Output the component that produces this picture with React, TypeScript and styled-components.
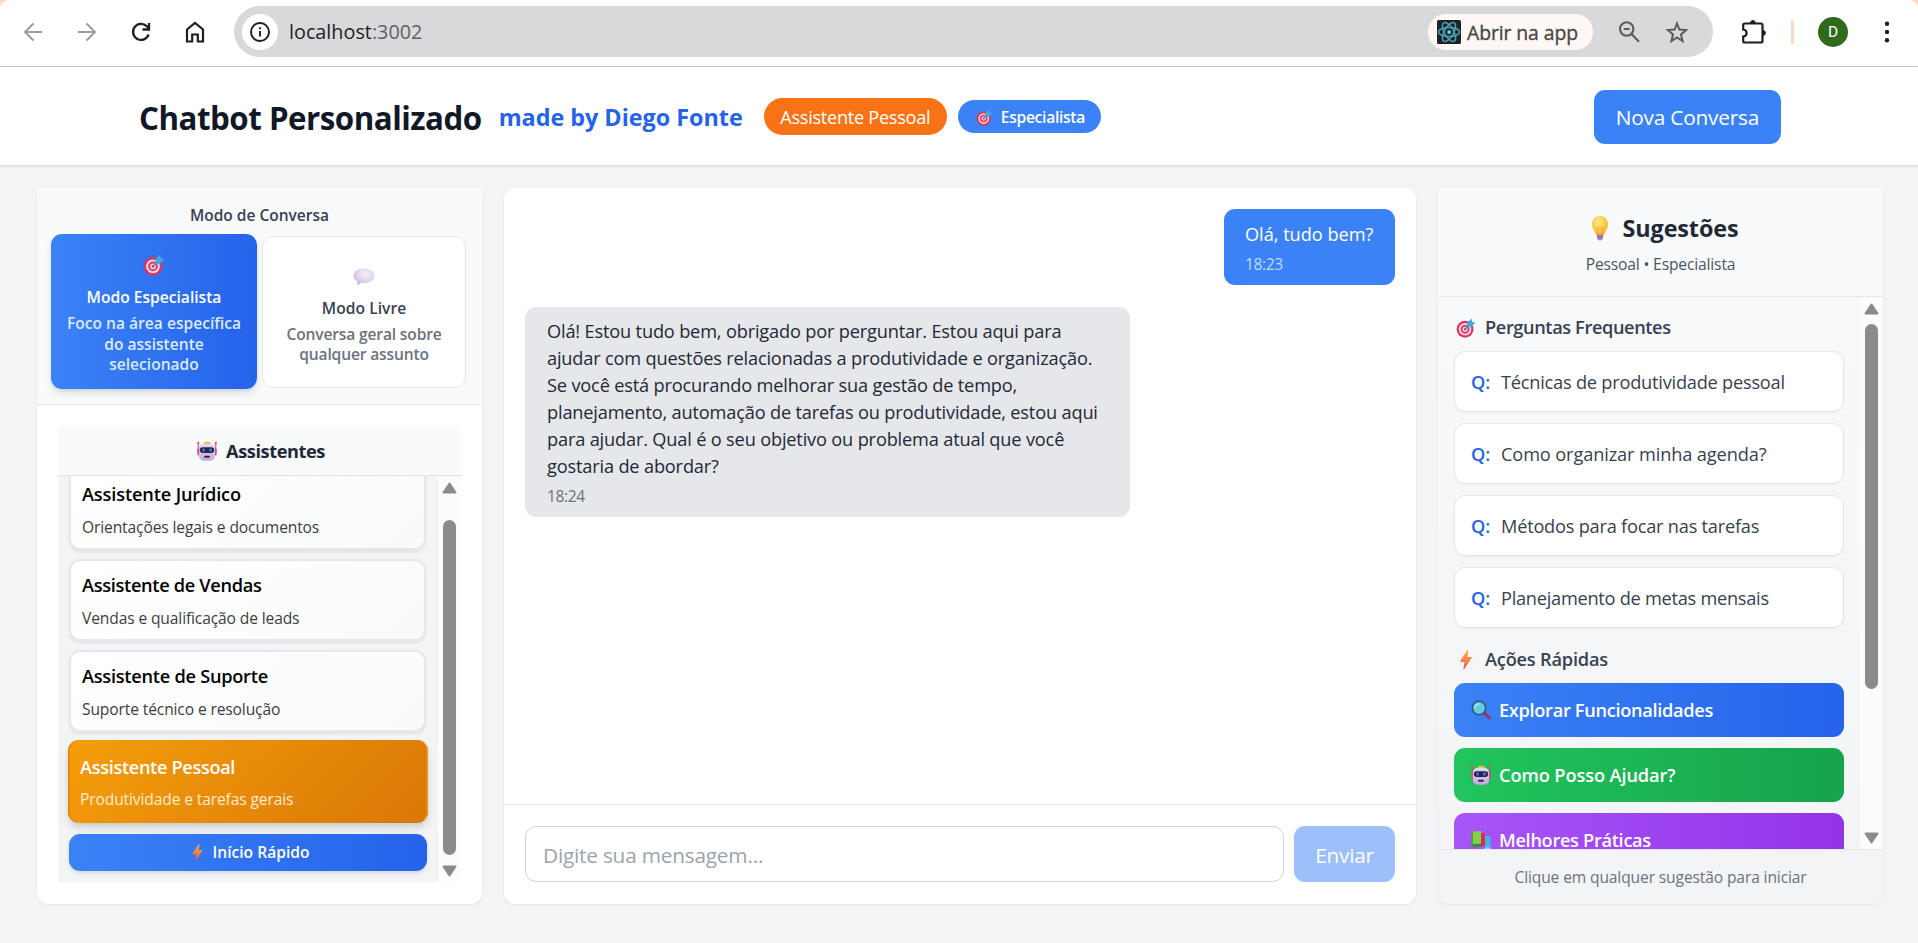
import React from 'react';
import styled, { createGlobalStyle, css } from 'styled-components';

const GlobalStyle = createGlobalStyle`
  *, *::before, *::after { box-sizing: border-box; }
  body {
    margin: 0;
    background: #f3f4f6;
    font-family: "Segoe UI", "Open Sans", "Noto Sans", sans-serif;
    color: #111827;
    overflow: hidden;
  }
  button, input { font-family: inherit; margin: 0; }
  button { border: 0; padding: 0; background: none; }
`;

const textXs = css`font-size: 15.6px; line-height: 22px;`;
const textSm = css`font-size: 18.2px; line-height: 27px;`;
const textBase = css`font-size: 20.8px; line-height: 32px;`;

/* ---------- Page ---------- */

const Page = styled.div`
  display: flex;
  flex-direction: column;
  height: 943px;
  background: #fbd9c4;
`;

/* ---------- Browser toolbar ---------- */

const Toolbar = styled.div`
  display: flex;
  align-items: center;
  flex: none;
  height: 67px;
  padding: 0 27px 3px 6px;
  background: #fff;
  border-bottom: 1px solid #c9c9cc;
  border-radius: 9px 9px 0 0;
`;

const NavButton = styled.button<{ $muted?: boolean }>`
  display: flex;
  align-items: center;
  justify-content: center;
  width: 54px;
  height: 40px;
  color: ${p => (p.$muted ? '#9b9b9b' : '#1f1f1f')};
`;

const AddressBar = styled.div`
  display: flex;
  align-items: center;
  flex: 1;
  height: 51px;
  margin-left: 12px;
  padding: 0 24px 0 8px;
  border-radius: 26px;
  background: #d9d9db;
`;

const SiteInfo = styled.span`
  display: flex;
  align-items: center;
  justify-content: center;
  width: 36px;
  height: 36px;
  border-radius: 50%;
  background: #fff;
  color: #1f1f1f;
`;

const Url = styled.span`
  flex: 1;
  margin-left: 11px;
  font-size: 19.8px;
  line-height: 30px;
  letter-spacing: 0;
  color: #1f1f1f;
  span { color: #5f6062; }
`;

const OpenInApp = styled.button`
  display: flex;
  align-items: center;
  gap: 6px;
  width: 165px;
  height: 36px;
  padding-left: 9px;
  border-radius: 18px;
  background: #fff8f4;
  font-size: 19.4px;
  line-height: 28px;
  letter-spacing: -0.1px;
  color: #474747;
  -webkit-text-stroke: 0.35px #474747;
`;

const OpenLabel = styled.span`
  padding-top: 2px;
`;

const BarIcon = styled.span<{ $gap: number }>`
  display: flex;
  margin-left: ${p => p.$gap}px;
  color: #5b5b5d;
`;

const ToolIcon = styled.span<{ $gap: number }>`
  display: flex;
  margin-left: ${p => p.$gap}px;
  color: #1f1f1f;
`;

const Separator = styled.span`
  width: 3px;
  height: 24px;
  margin-left: 24px;
  border-radius: 1.5px;
  background: #fbd9c4;
`;

const Avatar = styled.span`
  display: flex;
  align-items: center;
  justify-content: center;
  width: 30px;
  height: 30px;
  margin-left: 24px;
  border-radius: 50%;
  background: #2f6b1c;
  color: #fff;
  font-family: Roboto, sans-serif;
  font-size: 15.5px;
`;

/* ---------- App header ---------- */

const Header = styled.header`
  display: flex;
  align-items: center;
  justify-content: space-between;
  flex: none;
  height: 98px;
  padding: 2px 137px 0 139px;
  background: #fff;
  box-shadow: 0 1px 3px rgba(0, 0, 0, 0.1), 0 1px 2px rgba(0, 0, 0, 0.06);
  position: relative;
`;

const Brand = styled.div`
  display: flex;
  align-items: center;
`;

const Title = styled.h1`
  margin: 0;
  padding-top: 2px;
  font-size: 31.3px;
  line-height: 42px;
  font-weight: 700;
  letter-spacing: -0.5px;
  color: #111827;
`;

const Author = styled.span`
  margin-left: 17px;
  font-size: 23.4px;
  line-height: 32px;
  font-weight: 700;
  letter-spacing: -0.03px;
  color: #2563eb;
`;

const AssistantPill = styled.span`
  display: flex;
  align-items: center;
  justify-content: center;
  width: 183px;
  height: 37px;
  margin: -1px 0 0 21px;
  padding-top: 1px;
  border-radius: 19px;
  background: #f97316;
  color: #fff;
  ${textSm}
  letter-spacing: -0.3px;
`;

const ModePill = styled.span`
  display: flex;
  align-items: center;
  gap: 8px;
  width: 143px;
  height: 33px;
  margin: -1px 0 0 11px;
  padding: 1px 0 0 18px;
  border-radius: 17px;
  background: #3b82f6;
  color: #fff;
  ${textXs}
  font-weight: 600;
  letter-spacing: -0.28px;
`;

const NewChatButton = styled.button`
  width: 187px;
  height: 54px;
  padding-bottom: 1px;
  border-radius: 11px;
  background: #3b82f6;
  color: #fff;
  ${textBase}
  letter-spacing: -0.2px;
`;

/* ---------- Main columns ---------- */

const Main = styled.main`
  display: grid;
  grid-template-columns: 445px 912px 445px;
  column-gap: 22px;
  flex: 1;
  align-items: start;
  padding: 23px 35px 39px 37px;
  background: #f3f4f6;
`;

const Panel = styled.section<{ $tinted?: boolean }>`
  display: flex;
  flex-direction: column;
  height: 716px;
  border-radius: ${p => (p.$tinted ? '0 0 11px 11px' : '11px')};
  background: ${p => (p.$tinted ? 'linear-gradient(#f9fafb, #f3f4f6)' : '#fff')};
  box-shadow: 0 1px 3px rgba(0, 0, 0, 0.05), 0 1px 2px rgba(0, 0, 0, 0.03);
`;

/* Conversation mode */

const ModeSection = styled.div`
  flex: none;
  height: 217px;
  padding: 16px 16px 0 14px;
  background: #f9fafb;
  border-bottom: 1px solid #e5e7eb;
`;

const ModeHeading = styled.h2`
  margin: 0 0 8px;
  padding-left: 2px;
  font-size: 15.5px;
  line-height: 22px;
  font-weight: 600;
  text-align: center;
  color: #374151;
`;

const ModeGrid = styled.div`
  display: grid;
  grid-template-columns: 206px 204px;
  column-gap: 5px;
  align-items: center;
`;

const ModeCard = styled.button<{ $active?: boolean }>`
  display: flex;
  flex-direction: column;
  align-items: center;
  height: ${p => (p.$active ? 155 : 152)}px;
  padding-top: ${p => (p.$active ? 20 : 28)}px;
  border-radius: 11px;
  ${p =>
    p.$active
      ? css`
          background: linear-gradient(90deg, #3b82f6, #2563eb);
          color: #fff;
          box-shadow: 0 5px 8px -1px rgba(0, 0, 0, 0.12), 0 2px 5px -1px rgba(0, 0, 0, 0.08);
        `
      : css`
          background: #fff;
          color: #374151;
          border: 1px solid #e5e7eb;
        `}
`;

const ModeName = styled.span<{ $active?: boolean }>`
  margin-top: 10px;
  ${textXs}
  font-weight: 600;
  letter-spacing: ${p => (p.$active ? 0 : 0.04)}px;
`;

const ModeHint = styled.span<{ $active?: boolean }>`
  margin-top: 5px;
  padding: 0 10px;
  font-size: 15.6px;
  line-height: 20.6px;
  font-weight: 600;
  letter-spacing: ${p => (p.$active ? 0 : -0.16)}px;
  text-align: center;
  color: ${p => (p.$active ? '#dbeafe' : '#6b7280')};
`;

/* Assistants list */

const Assistants = styled.div`
  display: flex;
  flex-direction: column;
  flex: 1;
  min-height: 0;
  margin: 21px 21px 22px;
  background: #f3f4f6;
`;

const AssistantsHeader = styled.h2`
  display: flex;
  align-items: center;
  justify-content: center;
  gap: 9px;
  flex: none;
  height: 50px;
  margin: 0;
  padding: 1px 0 0 3px;
  background: #f9fafb;
  border-bottom: 1px solid #e0e2e6;
  ${textSm}
  font-weight: 700;
  letter-spacing: -0.42px;
  color: #1f2937;
`;

const ScrollArea = styled.div`
  display: flex;
  flex: 1;
  min-height: 0;
  overflow: hidden;
`;

const AssistantList = styled.div`
  display: flex;
  flex-direction: column;
  flex: 1;
  gap: 9px;
  margin-top: -8px;
  padding: 0 12px 0 11px;
`;

const AssistantCard = styled.button<{ $active?: boolean }>`
  display: flex;
  flex-direction: column;
  flex: none;
  text-align: left;
  border-radius: 11px;
  ${p =>
    p.$active
      ? css`
          height: 83px;
          margin: -1px -2px -0.5px -1px;
          padding: 14px 12px 0;
          background: linear-gradient(135deg, #f59e0b, #d97706);
          color: #fff;
          box-shadow: inset 2px 0 0 -0.5px #e58308, inset -2px 0 0 -0.5px #f0960c, 0 6px 10px -1px rgba(0, 0, 0, 0.12), 0 2px 5px rgba(0, 0, 0, 0.07);
        `
      : css`
          height: 82px;
          padding: 11px 11px 0;
          border: 2px solid #e5e7eb;
          background: linear-gradient(135deg, #ffffff, #f9fafb);
          color: #000;
          box-shadow: 0 2px 3px rgba(0, 0, 0, 0.08);
        `}
`;

const AssistantName = styled.span<{ $track: number }>`
  ${textSm}
  font-weight: 600;
  letter-spacing: ${p => p.$track}px;
`;

const AssistantRole = styled.span<{ $active?: boolean }>`
  margin-top: ${p => (p.$active ? 7 : 8)}px;
  ${textXs}
  letter-spacing: -0.13px;
  color: ${p => (p.$active ? '#fdeccb' : '#3d3d3f')};
`;

const QuickStart = styled.button`
  display: flex;
  align-items: center;
  justify-content: center;
  gap: 7px;
  flex: none;
  height: 37px;
  margin: 2px -1px 0 0;
  padding-left: 2px;
  border-radius: 11px;
  background: linear-gradient(90deg, #3b82f6, #2563eb);
  box-shadow: 0 2px 4px rgba(0, 0, 0, 0.12);
  color: #fff;
  ${textXs}
  font-weight: 600;
`;

/* Scrollbar */

const Track = styled.div`
  display: flex;
  flex-direction: column;
  align-items: center;
  flex: none;
  width: 23px;
  background: #fcfcfc;
  color: #8b8b8b;
`;

const Thumb = styled.div<{ $gap: number; $length: number }>`
  width: 13px;
  height: ${p => p.$length}px;
  margin-top: ${p => p.$gap}px;
  border-radius: 7px;
  background: currentColor;
`;

const Arrow = styled.svg<{ $gap: number; $down?: boolean }>`
  flex: none;
  width: 15px;
  height: 12px;
  margin-top: ${p => p.$gap}px;
  transform: ${p => (p.$down ? 'rotate(180deg)' : 'none')};
`;

/* ---------- Chat ---------- */

const Messages = styled.div`
  display: flex;
  flex-direction: column;
  flex: 1;
  gap: 22px;
  padding: 21px;
`;

const Bubble = styled.div<{ $own?: boolean }>`
  display: flex;
  flex-direction: column;
  align-self: ${p => (p.$own ? 'flex-end' : 'flex-start')};
  width: ${p => (p.$own ? '171px' : '605px')};
  height: ${p => (p.$own ? '76px' : '210px')};
  padding: ${p => (p.$own ? '12px 0 0 21px' : '11px 0 0 22px')};
  border-radius: 11px;
  background: ${p => (p.$own ? '#3b82f6' : '#e5e7eb')};
  color: ${p => (p.$own ? '#fff' : '#1f2937')};
`;

const MessageText = styled.span`
  ${textSm}
  letter-spacing: -0.17px;
  white-space: pre-line;
`;

const OwnText = styled(MessageText)`
  letter-spacing: -0.03px;
`;

const Time = styled.span<{ $own?: boolean }>`
  margin-top: 5px;
  ${textXs}
  letter-spacing: -0.4px;
  color: ${p => (p.$own ? '#bfdbfe' : '#6b7280')};
`;

const Composer = styled.form`
  display: flex;
  gap: 10px;
  flex: none;
  height: 100px;
  padding: 21px 21px 22px;
  border-top: 1px solid #e5e7eb;
`;

const MessageInput = styled.input`
  flex: 1;
  height: 56px;
  padding: 2px 17px 0;
  border: 1px solid #d1d5db;
  border-radius: 11px;
  background: #fff;
  ${textBase}
  letter-spacing: -0.21px;
  &::placeholder { color: #9ca3af; opacity: 1; }
`;

const SendButton = styled.button`
  width: 101px;
  height: 56px;
  padding-top: 1px;
  border-radius: 11px;
  background: #9dc0fa;
  color: #fff;
  ${textBase}
  letter-spacing: -0.27px;
`;

/* ---------- Suggestions ---------- */

const SuggestHeader = styled.div`
  display: flex;
  flex-direction: column;
  align-items: center;
  flex: none;
  height: 109px;
  padding-top: 23px;
  background: #f9fafb;
  border-bottom: 1px solid #e5e7eb;
`;

const SuggestTitle = styled.h2`
  display: flex;
  align-items: center;
  gap: 11px;
  margin: 0;
  padding-left: 5px;
  font-size: 23.4px;
  line-height: 34px;
  font-weight: 700;
  letter-spacing: -0.12px;
  color: #1f2937;
`;

const SuggestContext = styled.span`
  margin-top: 8px;
  ${textXs}
  letter-spacing: -0.15px;
  color: #4b5563;
`;

const SuggestBody = styled.div`
  display: flex;
  flex-direction: column;
  flex: 1;
  padding: 17px 16px 0;
`;

const GroupTitle = styled.h3<{ $later?: boolean }>`
  display: flex;
  align-items: center;
  gap: 9px;
  flex: none;
  margin: ${p => (p.$later ? '7px' : 0)} 0 10px;
  padding-left: 2px;
  ${textSm}
  font-weight: 600;
  letter-spacing: ${p => (p.$later ? -0.2 : -0.39)}px;
  color: #374151;
`;

const Question = styled.button`
  display: flex;
  align-items: center;
  flex: none;
  height: 61px;
  margin: 0 0 11px;
  padding: 2px 16px 0 16px;
  border: 1px solid #e5e7eb;
  border-radius: 11px;
  background: #fff;
  box-shadow: 0 1px 2px rgba(0, 0, 0, 0.05);
`;

const QuestionMark = styled.span`
  width: 30px;
  text-align: left;
  ${textSm}
  font-weight: 600;
  color: #2563eb;
`;

const QuestionText = styled.span<{ $track: number }>`
  ${textSm}
  letter-spacing: ${p => p.$track}px;
  color: #374151;
`;

const Action = styled.button<{ $from: string; $to: string; $track: number }>`
  display: flex;
  align-items: center;
  gap: 8px;
  flex: none;
  height: 54px;
  margin-bottom: 11px;
  padding-left: 17px;
  border-radius: 11px;
  background: linear-gradient(90deg, ${p => p.$from}, ${p => p.$to});
  color: #fff;
  ${textSm}
  font-weight: 600;
  letter-spacing: ${p => p.$track}px;
`;

const SuggestFooter = styled.div`
  flex: none;
  height: 55px;
  padding-top: 16px;
  border-top: 1px solid #e5e7eb;
  border-radius: 0 0 11px 11px;
  background: #f3f4f6;
  text-align: center;
  ${textXs}
  letter-spacing: -0.13px;
  color: #6b7280;
`;

/* ---------- Drawings ---------- */

type IconProps = { size?: number };

const TargetIcon = ({ size = 21 }: IconProps) => (
  <svg width={size} height={size} viewBox="0 0 32 32">
    <circle cx="14.5" cy="18" r="13.5" fill="#d8365f" />
    <circle cx="14.5" cy="18" r="10" fill="#f6d3e2" />
    <circle cx="14.5" cy="18" r="7" fill="#d8365f" />
    <circle cx="14.5" cy="18" r="4.2" fill="#f6d3e2" />
    <circle cx="14.5" cy="18" r="1.8" fill="#c22a55" />
    <path d="M14.5 18 23 9" stroke="#2b7fc4" strokeWidth="1.8" />
    <path d="m17 14.8 1-7.2L24.8.8l1 5.6 5.4.8-6.6 6.8Z" fill="#42a8e0" />
  </svg>
);

const SpeechIcon = () => (
  <svg width="22" height="22" viewBox="0 0 22 22">
    <defs>
      <radialGradient id="speech" cx="0.6" cy="0.35" r="0.7">
        <stop offset="0" stopColor="#f5effa" />
        <stop offset="0.7" stopColor="#ddd0ea" />
        <stop offset="1" stopColor="#b9a6d0" />
      </radialGradient>
    </defs>
    <path d="M11 3.500c6 0 10.500 3 10.500 7.200S17 18 11 18c-1 0-2-.1-3-.3-1 .9-2 2-3.200 2-.6 0-.8-.4-.5-1 .3-.7.3-1.400.2-2.200C2 15 .5 13 .5 10.700.5 6.500 5 3.500 11 3.500Z" fill="url(#speech)" />
  </svg>
);

const RobotIcon = () => (
  <svg width="20" height="20" viewBox="0 0 32 32">
    <defs>
      <linearGradient id="robotFace" x1="0" y1="0" x2="0" y2="1">
        <stop offset="0" stopColor="#e4dbea" />
        <stop offset="1" stopColor="#c8a8dc" />
      </linearGradient>
    </defs>
    <path d="M2 3v14M30 3v14" stroke="#d6447c" strokeWidth="1.8" />
    <circle cx="2" cy="3" r="1.7" fill="#e0467f" />
    <circle cx="30" cy="3" r="1.700" fill="#e0467f" />
    <rect x="0.500" y="11" width="5" height="12" rx="2.500" fill="#d6447c" />
    <rect x="26.500" y="11" width="5" height="12" rx="2.500" fill="#d6447c" />
    <rect x="11" y="1" width="11" height="7" rx="3" fill="#f2b84b" />
    <path d="M11 4.500h10a8 8 0 0 1 8 8V23a8.500 8.500 0 0 1-8.500 8.500h-9A8.500 8.500 0 0 1 3 23V12.500a8 8 0 0 1 8-8Z" fill="url(#robotFace)" />
    <rect x="4.500" y="10" width="23" height="9" rx="4.500" fill="#2b2452" />
    <rect x="8.500" y="12" width="4" height="5" rx="1.800" fill="#3a86c8" />
    <rect x="19.500" y="12" width="4" height="5" rx="1.800" fill="#3a86c8" />
    <rect x="11.500" y="23.500" width="9" height="3.200" rx="1" fill="#2b2452" />
  </svg>
);

const BoltIcon = ({ size = 20 }: IconProps) => (
  <svg width={size} height={size} viewBox="0 0 20 20">
    <defs>
      <linearGradient id="bolt" x1="0" y1="0" x2="0" y2="1">
        <stop offset="0" stopColor="#fba83c" />
        <stop offset="0.55" stopColor="#f8804c" />
        <stop offset="1" stopColor="#f04a5e" />
      </linearGradient>
    </defs>
    <path d="M11 .8c.4-.8 1.300-.4 1.200.4l-.7 5.800h3.400c.8 0 1 .6.600 1.200L8.400 18.800c-.5.7-1.200.4-1-.5l1.200-6.300H5c-.8 0-1.100-.6-.7-1.200Z" fill="url(#bolt)" />
  </svg>
);

const BulbIcon = () => (
  <svg width="24" height="26" viewBox="0 0 24 26">
    <defs>
      <radialGradient id="glass" cx="0.4" cy="0.3" r="0.8">
        <stop offset="0" stopColor="#ffe98a" />
        <stop offset="0.6" stopColor="#fcc83c" />
        <stop offset="1" stopColor="#ee9a2f" />
      </radialGradient>
    </defs>
    <path d="M12 1c4.700 0 8 3.400 8 8 0 3.800-1.700 5.900-2.900 8-.8 1.400-1 3.500-2 3.500H8.900c-1 0-1.200-2.100-2-3.500C5.700 14.900 4 12.800 4 9c0-4.600 3.300-8 8-8Z" fill="url(#glass)" />
    <path d="M10 19.500 9 12c1.500 1.600 4.500 1.600 6 0l-1 7.500" fill="none" stroke="#e9a136" strokeWidth="0.700" />
    <path d="M9 19.500h6v3.200c0 1.500-1.200 2.800-3 2.800s-3-1.300-3-2.800Z" fill="#a982b4" />
    <path d="M9 21.700h6" stroke="#83609a" strokeWidth="0.900" />
  </svg>
);

const MagnifierIcon = () => (
  <svg width="20" height="20" viewBox="0 0 20 20">
    <path d="m12.500 12.500 5.800 5.300" stroke="#8c3d63" strokeWidth="3.400" strokeLinecap="round" />
    <circle cx="8" cy="8" r="6.700" fill="#62cbe2" stroke="#344f7f" strokeWidth="1.500" />
    <path d="M4.300 7A4.300 4.300 0 0 1 8 3.800" stroke="#b5edf6" strokeWidth="1.300" fill="none" strokeLinecap="round" />
  </svg>
);

const BooksIcon = () => (
  <svg width="20" height="20" viewBox="0 0 20 20">
    <path d="M14 6h5.500v12.500H14z" fill="#3fb2e8" />
    <path d="M14.500 17.500h5V20h-8z" fill="#8fd8f5" />
    <path d="M9.500 3.500 14 3v12.500l-4.500 1z" fill="#d62f4d" />
    <path d="M1 1.800 10 1v12.800l-9 .9z" fill="#84cf48" />
    <path d="M1 14.200 10 13.500v3l-7 .7c-1.300 0-2-.6-2-1.500z" fill="#3f8a3a" />
    <path d="M.2 2.200 2 1.800V15H.2z" fill="#5a9b3c" />
  </svg>
);

const BackIcon = ({ flip = false }: { flip?: boolean }) => (
  <svg width="20" height="20" viewBox="0 0 20 20" fill="none" stroke="currentColor" strokeWidth="1.900">
    <path d={flip ? 'M1 10h17M9.500 1.500 18 10l-8.500 8.500' : 'M19 10H2M10.500 1.500 2 10l8.500 8.500'} />
  </svg>
);

const ReloadIcon = () => (
  <svg width="22" height="22" viewBox="0 0 22 22" fill="none" stroke="currentColor" strokeWidth="2.300">
    <path d="M18.600 13.500A8 8 0 1 1 16.800 5.300L19 7.500" />
    <path d="M19 2v6.500h-6.500" />
  </svg>
);

const HomeIcon = () => (
  <svg width="22" height="24" viewBox="0 0 22 24" fill="none" stroke="currentColor" strokeWidth="2.200">
    <path d="M3 9.500 11 3l8 6.500V21.500h-5.200v-7H8.200v7H3Z" />
  </svg>
);

const InfoIcon = () => (
  <svg width="22" height="22" viewBox="0 0 22 22" fill="none" stroke="currentColor" strokeWidth="1.900">
    <circle cx="11" cy="11" r="9" />
    <path d="M11 10v5.500M11 6.200v2" />
  </svg>
);

const ReactIcon = () => (
  <svg width="24" height="24" viewBox="0 0 24 24" fill="none" stroke="#4b9fb3" strokeWidth="1.500">
    <rect width="24" height="24" rx="1.500" fill="#1c2327" stroke="none" />
    <ellipse cx="12" cy="12" rx="10.500" ry="4.600" />
    <ellipse cx="12" cy="12" rx="10.500" ry="4.600" transform="rotate(60 12 12)" />
    <ellipse cx="12" cy="12" rx="10.500" ry="4.600" transform="rotate(120 12 12)" />
    <rect x="10.500" y="10.500" width="3.200" height="3.200" fill="#6ee0f5" stroke="none" />
  </svg>
);

const ZoomOutIcon = () => (
  <svg width="22" height="22" viewBox="0 0 22 22" fill="none" stroke="currentColor" strokeWidth="2.100">
    <circle cx="8.700" cy="8" r="6.700" />
    <path d="m13.300 12.700 7.700 8M5.800 8h5.800" />
  </svg>
);

const StarIcon = () => (
  <svg width="24" height="24" viewBox="0 0 24 24" fill="none" stroke="currentColor" strokeWidth="2">
    <path d="m12 3.500 2.400 6 6.700.6-5.100 4.300 1.600 6.600-5.600-3.500-5.600 3.500L8 14.400l-5.100-4.300 6.700-.6Z" />
  </svg>
);

const PuzzleIcon = () => (
  <svg width="26" height="26" viewBox="0 0 26 26">
    <path
      d="M4 4.500h16c.8 0 1.500.7 1.500 1.500v16c0 .8-.7 1.500-1.500 1.500H3.700c-.8 0-1.500-.7-1.500-1.500v-4.500c2.200-.3 3.400-1.500 3.400-3.500s-1.200-3.200-3.400-3.500V6c0-.8.7-1.500 1.500-1.500Z"
      fill="none"
      stroke="currentColor"
      strokeWidth="2.200"
    />
    <path d="M9.500 4a2.400 2.400 0 0 1 4.800 0ZM22 11.600a2.400 2.400 0 0 1 0 4.800Z" fill="currentColor" stroke="currentColor" />
  </svg>
);

const DotsIcon = () => (
  <svg width="8" height="24" viewBox="0 0 8 24" fill="currentColor">
    <circle cx="4" cy="3.700" r="2.200" />
    <circle cx="4" cy="12" r="2.200" />
    <circle cx="4" cy="20.300" r="2.200" />
  </svg>
);

const ScrollArrow = ({ gap, down }: { gap: number; down?: boolean }) => (
  <Arrow $gap={gap} $down={down} viewBox="0 0 15 12" fill="currentColor" stroke="currentColor" strokeWidth="2" strokeLinejoin="round">
    <path d="M7.500 1.500 13.500 10.500h-12Z" />
  </Arrow>
);

/* ---------- Data ---------- */

const assistants = [
  { name: 'Assistente Jurídico', role: 'Orientações legais e documentos', track: -0.15 },
  { name: 'Assistente de Vendas', role: 'Vendas e qualificação de leads', track: -0.32 },
  { name: 'Assistente de Suporte', role: 'Suporte técnico e resolução', track: -0.26 },
  { name: 'Assistente Pessoal', role: 'Produtividade e tarefas gerais', track: -0.35, active: true },
];

const questions = [
  { text: 'Técnicas de produtividade pessoal', track: -0.22 },
  { text: 'Como organizar minha agenda?', track: -0.12 },
  { text: 'Métodos para focar nas tarefas', track: -0.22 },
  { text: 'Planejamento de metas mensais', track: -0.26 },
];

const actions = [
  { text: 'Explorar Funcionalidades', icon: <MagnifierIcon />, from: '#3b82f6', to: '#2563eb', track: -0.31 },
  { text: 'Como Posso Ajudar?', icon: <RobotIcon />, from: '#22c55e', to: '#16a34a', track: -0.1 },
  { text: 'Melhores Práticas', icon: <BooksIcon />, from: '#a855f7', to: '#9333ea', track: -0.31 },
];

const reply = `Olá! Estou tudo bem, obrigado por perguntar. Estou aqui para
ajudar com questões relacionadas a produtividade e organização.
Se você está procurando melhorar sua gestão de tempo,
planejamento, automação de tarefas ou produtividade, estou aqui
para ajudar. Qual é o seu objetivo ou problema atual que você
gostaria de abordar?`;

export default function App() {
  return (
    <Page>
      <GlobalStyle />
      <Toolbar>
        <NavButton $muted><BackIcon /></NavButton>
        <NavButton $muted><BackIcon flip /></NavButton>
        <NavButton><ReloadIcon /></NavButton>
        <NavButton><HomeIcon /></NavButton>
        <AddressBar>
          <SiteInfo><InfoIcon /></SiteInfo>
          <Url>localhost<span>:3002</span></Url>
          <OpenInApp><ReactIcon /><OpenLabel>Abrir na app</OpenLabel></OpenInApp>
          <BarIcon $gap={25}><ZoomOutIcon /></BarIcon>
          <BarIcon $gap={25}><StarIcon /></BarIcon>
        </AddressBar>
        <ToolIcon $gap={28}><PuzzleIcon /></ToolIcon>
        <Separator />
        <Avatar>D</Avatar>
        <ToolIcon $gap={35}><DotsIcon /></ToolIcon>
      </Toolbar>

      <Header>
        <Brand>
          <Title>Chatbot Personalizado</Title>
          <Author>made by Diego Fonte</Author>
          <AssistantPill>Assistente Pessoal</AssistantPill>
          <ModePill><TargetIcon size={17} />Especialista</ModePill>
        </Brand>
        <NewChatButton>Nova Conversa</NewChatButton>
      </Header>

      <Main>
        <Panel>
          <ModeSection>
            <ModeHeading>Modo de Conversa</ModeHeading>
            <ModeGrid>
              <ModeCard $active>
                <TargetIcon size={22} />
                <ModeName $active>Modo Especialista</ModeName>
                <ModeHint $active>Foco na área específica do assistente selecionado</ModeHint>
              </ModeCard>
              <ModeCard>
                <SpeechIcon />
                <ModeName>Modo Livre</ModeName>
                <ModeHint>Conversa geral sobre qualquer assunto</ModeHint>
              </ModeCard>
            </ModeGrid>
          </ModeSection>
          <Assistants>
            <AssistantsHeader><RobotIcon />Assistentes</AssistantsHeader>
            <ScrollArea>
              <AssistantList>
                {assistants.map(a => (
                  <AssistantCard key={a.name} $active={a.active}>
                    <AssistantName $track={a.track}>{a.name}</AssistantName>
                    <AssistantRole $active={a.active}>{a.role}</AssistantRole>
                  </AssistantCard>
                ))}
                <QuickStart><BoltIcon size={17} />Início Rápido</QuickStart>
              </AssistantList>
              <Track>
                <ScrollArrow gap={6} />
                <Thumb $gap={26} $length={335} />
                <ScrollArrow gap={10} down />
              </Track>
            </ScrollArea>
          </Assistants>
        </Panel>

        <Panel>
          <Messages>
            <Bubble $own>
              <OwnText>Olá, tudo bem?</OwnText>
              <Time $own>18:23</Time>
            </Bubble>
            <Bubble>
              <MessageText>{reply}</MessageText>
              <Time>18:24</Time>
            </Bubble>
          </Messages>
          <Composer>
            <MessageInput placeholder="Digite sua mensagem..." />
            <SendButton type="button">Enviar</SendButton>
          </Composer>
        </Panel>

        <Panel $tinted>
          <SuggestHeader>
            <SuggestTitle><BulbIcon />Sugestões</SuggestTitle>
            <SuggestContext>Pessoal • Especialista</SuggestContext>
          </SuggestHeader>
          <ScrollArea>
            <SuggestBody>
              <GroupTitle><TargetIcon size={20} />Perguntas Frequentes</GroupTitle>
              {questions.map(q => (
                <Question key={q.text}>
                  <QuestionMark>Q:</QuestionMark>
                  <QuestionText $track={q.track}>{q.text}</QuestionText>
                </Question>
              ))}
              <GroupTitle $later><BoltIcon />Ações Rápidas</GroupTitle>
              {actions.map(a => (
                <Action key={a.text} $from={a.from} $to={a.to} $track={a.track}>
                  {a.icon}
                  {a.text}
                </Action>
              ))}
            </SuggestBody>
            <Track>
              <ScrollArrow gap={6} />
              <Thumb $gap={9} $length={365} />
              <ScrollArrow gap={143} down />
            </Track>
          </ScrollArea>
          <SuggestFooter>Clique em qualquer sugestão para iniciar</SuggestFooter>
        </Panel>
      </Main>
    </Page>
  );
}
